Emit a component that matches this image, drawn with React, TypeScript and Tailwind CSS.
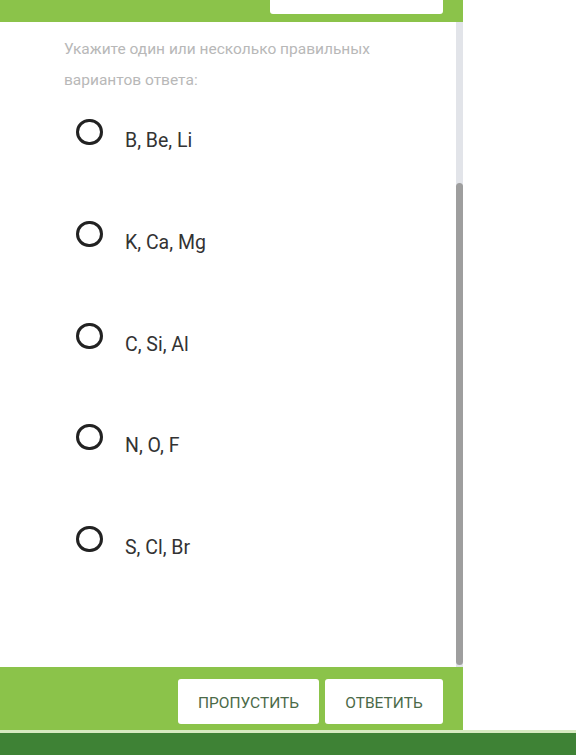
const OPTIONS = ['B, Be, Li', 'K, Ca, Mg', 'C, Si, Al', 'N, O, F', 'S, Cl, Br']

function Radio() {
  return <div className="w-[27px] h-[26px] rounded-full border-[3px] border-[#222222] shrink-0" />
}

export default function App() {
  return (
    <div className="h-[755px] w-[576px] flex flex-col bg-white overflow-hidden font-['Roboto',sans-serif]">
      <div className="flex flex-1 min-h-0">
        {/* Question panel */}
        <div className="w-[463px] flex flex-col">
          {/* Top bar */}
          <div className="h-[22px] bg-[#8bc34a] flex justify-end pr-[20px]">
            <div className="w-[173px] h-[14px] bg-white rounded-b-[3px]" />
          </div>

          {/* Body with scrollbar */}
          <div className="flex flex-1 min-h-0">
            <div className="flex-1 pt-3">
              <p className="pl-[64px] pr-[60px] text-[15.5px] leading-[31px] text-[#b8b8b8]">
                Укажите один или несколько правильных вариантов ответа:
              </p>
              <div className="mt-[23px] pl-[76px]">
                {OPTIONS.map((opt) => (
                  <div key={opt} className="h-[101.75px] flex items-start gap-[22px]">
                    <Radio />
                    <span className="mt-[9px] text-[19.5px] leading-[26px] text-[#333333]">{opt}</span>
                  </div>
                ))}
              </div>
            </div>
            <div className="w-[7px] bg-[#e2e4e9] flex flex-col">
              <div className="h-[161px]" />
              <div className="flex-1 mb-[2px] bg-[#9e9e9e] rounded-full" />
            </div>
          </div>

          {/* Footer */}
          <div className="h-[63px] bg-[#8bc34a] flex items-start justify-end gap-[6px] pt-[12px] pr-[20px]">
            <button className="w-[141px] h-[45px] pt-[5px] bg-white rounded-[3px] text-[15.5px] text-[#4b6a48] uppercase">
              Пропустить
            </button>
            <button className="w-[118px] h-[45px] pt-[5px] bg-white rounded-[3px] text-[15.5px] text-[#4b6a48] uppercase">
              Ответить
            </button>
          </div>
        </div>
        <div className="flex-1 bg-white" />
      </div>
      <div className="h-[3px] bg-[#d6ebc0]" />
      <div className="h-[22px] bg-[#3e8235]" />
    </div>
  )
}
